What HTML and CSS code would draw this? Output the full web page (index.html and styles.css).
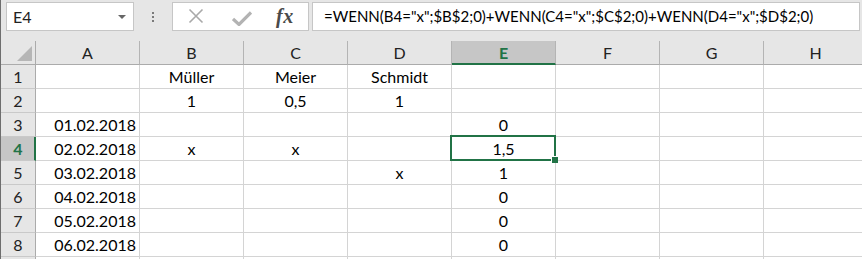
FILE: index.html
```html
<!DOCTYPE html>
<html>
<head>
    <title>Tabelle1</title>
    <link rel="stylesheet" href="styles.css">
</head>
<body>
    <div class="app">
        <!-- Bearbeitungsleiste -->
        <div class="formula-bar">
            <div class="name-box">
                <span>E4</span>
                <span class="dropdown"></span>
            </div>
            <div class="grip"><i></i><i></i><i></i></div>
            <div class="fx-buttons">
                <svg class="btn-cancel" width="16" height="16" viewBox="0 0 16 16">
                    <path d="M1.5 1.5 L14.5 14.5 M14.5 1.5 L1.5 14.5" stroke="#a9a9a9" stroke-width="1.6" fill="none"/>
                </svg>
                <svg class="btn-ok" width="20" height="15" viewBox="0 0 20 15">
                    <path d="M1 8 L7 13.5 L19 1.5" stroke="#b3b3b3" stroke-width="3.2" fill="none"/>
                </svg>
                <span class="fx">fx</span>
            </div>
            <div class="formula-input">=WENN(B4="x";$B$2;0)+WENN(C4="x";$C$2;0)+WENN(D4="x";$D$2;0)</div>
        </div>

        <!-- Tabelle -->
        <div class="sheet">
            <div class="row head">
                <div class="rh corner"><span class="tri"></span></div>
                <div class="ch">A</div>
                <div class="ch">B</div>
                <div class="ch">C</div>
                <div class="ch">D</div>
                <div class="ch active">E</div>
                <div class="ch">F</div>
                <div class="ch">G</div>
                <div class="ch">H</div>
            </div>
            <div class="row">
                <div class="rh">1</div>
                <div class="c"></div>
                <div class="c mid">Müller</div>
                <div class="c mid">Meier</div>
                <div class="c mid">Schmidt</div>
                <div class="c"></div>
                <div class="c"></div>
                <div class="c"></div>
                <div class="c"></div>
            </div>
            <div class="row">
                <div class="rh">2</div>
                <div class="c"></div>
                <div class="c mid">1</div>
                <div class="c mid">0,5</div>
                <div class="c mid">1</div>
                <div class="c"></div>
                <div class="c"></div>
                <div class="c"></div>
                <div class="c"></div>
            </div>
            <div class="row">
                <div class="rh">3</div>
                <div class="c num">01.02.2018</div>
                <div class="c"></div>
                <div class="c"></div>
                <div class="c"></div>
                <div class="c mid">0</div>
                <div class="c"></div>
                <div class="c"></div>
                <div class="c"></div>
            </div>
            <div class="row">
                <div class="rh active">4</div>
                <div class="c num">02.02.2018</div>
                <div class="c mid">x</div>
                <div class="c mid">x</div>
                <div class="c"></div>
                <div class="c mid selected">1,5<span class="handle"></span></div>
                <div class="c"></div>
                <div class="c"></div>
                <div class="c"></div>
            </div>
            <div class="row">
                <div class="rh">5</div>
                <div class="c num">03.02.2018</div>
                <div class="c"></div>
                <div class="c"></div>
                <div class="c mid">x</div>
                <div class="c mid">1</div>
                <div class="c"></div>
                <div class="c"></div>
                <div class="c"></div>
            </div>
            <div class="row">
                <div class="rh">6</div>
                <div class="c num">04.02.2018</div>
                <div class="c"></div>
                <div class="c"></div>
                <div class="c"></div>
                <div class="c mid">0</div>
                <div class="c"></div>
                <div class="c"></div>
                <div class="c"></div>
            </div>
            <div class="row">
                <div class="rh">7</div>
                <div class="c num">05.02.2018</div>
                <div class="c"></div>
                <div class="c"></div>
                <div class="c"></div>
                <div class="c mid">0</div>
                <div class="c"></div>
                <div class="c"></div>
                <div class="c"></div>
            </div>
            <div class="row">
                <div class="rh">8</div>
                <div class="c num">06.02.2018</div>
                <div class="c"></div>
                <div class="c"></div>
                <div class="c"></div>
                <div class="c mid">0</div>
                <div class="c"></div>
                <div class="c"></div>
                <div class="c"></div>
            </div>
            <div class="row last">
                <div class="rh"></div>
                <div class="c"></div>
                <div class="c"></div>
                <div class="c"></div>
                <div class="c"></div>
                <div class="c"></div>
                <div class="c"></div>
                <div class="c"></div>
                <div class="c"></div>
            </div>
        </div>
    </div>
</body>
</html>
```

FILE: styles.css
```css
html, body {
    margin: 0;
    padding: 0;
    overflow: hidden;
}

body {
    font-family: Lato, "Liberation Sans", sans-serif;
    font-size: 16px;
    color: #000;
    background-color: #e6e6e6;
}

.app {
    border-left: 1px solid #6e6e6e;
    width: 900px;
}

/* Bearbeitungsleiste */
.formula-bar {
    height: 41px;
    display: flex;
    align-items: flex-start;
    padding-top: 2px;
    box-sizing: border-box;
}

.name-box {
    margin-left: 5px;
    width: 128px;
    height: 29px;
    box-sizing: border-box;
    background-color: #fff;
    border: 1px solid #c6c6c6;
    display: flex;
    align-items: center;
    justify-content: space-between;
    padding: 0 7px 0 6px;
    color: #222;
}

.dropdown {
    width: 0;
    height: 0;
    border-left: 4px solid transparent;
    border-right: 4px solid transparent;
    border-top: 4px solid #666;
}

.grip {
    width: 38px;
    height: 29px;
    display: flex;
    flex-direction: column;
    align-items: center;
    justify-content: center;
    gap: 2px;
}

.grip i {
    display: block;
    width: 2px;
    height: 2px;
    background-color: #7a7a7a;
}

.fx-buttons {
    width: 137px;
    height: 29px;
    box-sizing: border-box;
    background-color: #fff;
    border: 1px solid #c6c6c6;
    display: flex;
    align-items: center;
    padding-left: 15px;
}

.btn-cancel {
    margin-top: -1px;
}

.btn-ok {
    margin-left: 28px;
    margin-top: 3px;
}

.fx {
    margin-left: 24px;
    font-family: "Liberation Serif", serif;
    font-style: italic;
    font-weight: bold;
    font-size: 20px;
    color: #4a4a4a;
    letter-spacing: 0.5px;
}

.formula-input {
    margin-left: 3px;
    width: 548px;
    height: 29px;
    box-sizing: border-box;
    background-color: #fff;
    border: 1px solid #c6c6c6;
    padding-left: 11px;
    line-height: 27px;
    font-size: 15px;
    white-space: nowrap;
    overflow: hidden;
}

/* Tabelle */
.sheet {
    background-color: #fff;
}

.row {
    display: flex;
    height: 24px;
}

.row > div {
    box-sizing: border-box;
    flex: none;
    height: 24px;
    line-height: 23px;
    white-space: nowrap;
}

.rh {
    width: 35px;
    background-color: #e6e6e6;
    border-right: 1px solid #ababab;
    border-bottom: 1px solid #c9c9c9;
    text-align: center;
    color: #222;
}

.rh.active {
    background-color: #c6c6c6;
    border-right: 2px solid #217346;
    color: #217346;
    font-weight: bold;
    padding-left: 1px;
}

.corner {
    position: relative;
    border-bottom: 1px solid #ababab;
}

.tri {
    position: absolute;
    right: 3px;
    bottom: 3px;
    width: 0;
    height: 0;
    border-left: 15px solid transparent;
    border-bottom: 15px solid #b6b6b6;
}

.ch {
    width: 104px;
    background-color: #e6e6e6;
    border-right: 1px solid #b4b4b4;
    border-bottom: 1px solid #ababab;
    text-align: center;
    color: #222;
}

.ch.active {
    background-color: #c6c6c6;
    border-bottom: 2px solid #217346;
    color: #217346;
    font-weight: bold;
}

.c {
    width: 104px;
    border-right: 1px solid #d4d4d4;
    border-bottom: 1px solid #d4d4d4;
}

.num {
    text-align: right;
    padding-right: 3px;
}

.mid {
    text-align: center;
}

.selected {
    position: relative;
}

.selected::after {
    content: "";
    position: absolute;
    top: -2px;
    left: -2px;
    right: -1px;
    bottom: -1px;
    border: 2px solid #217346;
}

.handle {
    position: absolute;
    right: -3px;
    bottom: -3px;
    width: 6px;
    height: 6px;
    background-color: #217346;
    border-left: 1px solid #fff;
    border-top: 1px solid #fff;
    z-index: 1;
}
```
